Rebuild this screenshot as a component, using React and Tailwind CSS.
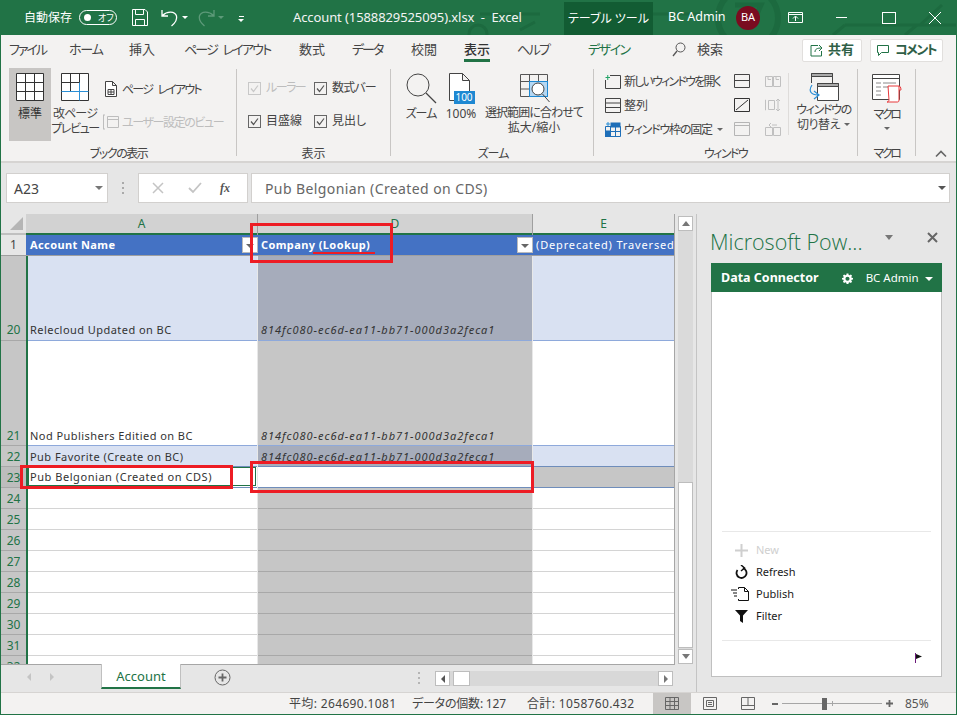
import React from "react";

function Sep({ x = "" }) {
  return <div className={`w-px self-stretch my-[5px] bg-[#c8c6c4] shrink-0 ${x}`} />;
}

function GroupLabel({ children, cls = "" }) {
  return <div className={`h-[16px] pt-[1px] text-center text-[12px] leading-[15px] text-[#444] ${cls}`}>{children}</div>;
}

function Check({ off, label, w, cls = "" }) {
  return (
    <div className="flex items-center h-[16px]" style={{ width: w }}>
      <svg width="13" height="13" viewBox="0 0 13 13" className="shrink-0">
        <rect x=".5" y=".5" width="12" height="12" fill="none" stroke={off ? "#c8c8c8" : "#666"} />
        <path d="M3 6.5l2.5 3L10 3.5" fill="none" stroke={off ? "#c8c8c8" : "#555"} strokeWidth="1.2" />
      </svg>
      <span className={`ml-[5px] text-[12px] leading-[16px] whitespace-nowrap ${cls} ${off ? "text-[#bdbdbd]" : "text-[#444]"}`}>{label}</span>
    </div>
  );
}

function RowHead({ n, h, dark, tall }) {
  return (
    <div
      className={`w-[25px] shrink-0 flex items-end justify-center text-[12px] leading-[15px] border-b border-[#a8a8a8] ${tall ? "pb-[3px]" : "pb-[2px]"} ${dark ? "bg-[#bdbdbd]" : "bg-[#c6c6c6]"} text-[#217346]`}
      style={{ height: h }}
    >
      {n}
    </div>
  );
}

function Row({ n, h, a, d, aBg = "bg-white", dBg = "bg-[#c6c6c6]", eBg = "bg-white", line = "border-[#d4d4d4]", dLine = "border-[#a8a8a8]", active, dark, tall }) {
  return (
    <div className="flex shrink-0" style={{ height: h }}>
      <RowHead n={n} h={h} dark={dark} tall={tall} />
      <div className="w-[2px] bg-[#217346] shrink-0" />
      <div className={`w-[229px] shrink-0 border-b ${line} ${aBg} flex items-end text-[11px] leading-[15px] tracking-[0.45px] text-[#333] relative`}>
        {active ? (
          <div className="w-[228px] h-[19px] border border-[#217346] ml-0 mb-[1px] flex items-center pl-[1px] tracking-[0.55px]">{a}</div>
        ) : (
          <div className={`pl-[2px] whitespace-nowrap ${tall ? "pb-[3px]" : "pb-[2px]"}`}>{a}</div>
        )}
      </div>
      <div className="w-px bg-[#e8e8e8] shrink-0" />
      <div className={`w-[274px] shrink-0 border-b ${dLine} ${dBg} flex items-end pl-[3px] text-[11px] leading-[15px] italic tracking-[0.97px] text-[#333] whitespace-nowrap ${tall ? "pb-[3px]" : "pb-[2px]"}`}>{d}</div>
      <div className="w-px bg-[#e8e8e8] shrink-0" />
      <div className={`w-[141px] shrink-0 border-b ${line} ${eBg}`} />
    </div>
  );
}

function FilterBtn({ cls = "" }) {
  return (
    <div className={`w-[16px] h-[16px] bg-white border border-[#bbb] flex items-center justify-center shrink-0 ${cls}`}>
      <div className="w-0 h-0 border-x-[4px] border-x-transparent border-t-[4px] border-t-[#666] mt-[2px]" />
    </div>
  );
}

function ScrollBtn({ dir, w, h }) {
  const tri = {
    up: "border-x-[4px] border-x-transparent border-b-[5px] border-b-[#777]",
    down: "border-x-[4px] border-x-transparent border-t-[5px] border-t-[#777]",
    left: "border-y-[4px] border-y-transparent border-r-[4px] border-r-[#555]",
    right: "border-y-[4px] border-y-transparent border-l-[4px] border-l-[#777]",
  }[dir];
  return (
    <div className="bg-white border border-[#bdbdbd] flex items-center justify-center shrink-0" style={{ width: w, height: h }}>
      <div className={`w-0 h-0 ${tri}`} />
    </div>
  );
}

function PaneItem({ icon, label, off }) {
  return (
    <div className="flex items-center h-[22px]">
      <div className="w-[30px] flex justify-center shrink-0 ml-[14px]">{icon}</div>
      <span className={`text-[11px] ${off ? "text-[#cfcfcf]" : "text-[#1a1a1a]"}`}>{label}</span>
    </div>
  );
}

export default function App() {
  const rows = [];
  for (let i = 24; i <= 32; i++) rows.push(<Row key={i} n={i} h={21} />);
  return (
    <div className="relative w-[957px] h-[715px] overflow-hidden flex flex-col bg-[#217346] pl-px pr-px pb-px font-['Noto_Sans','Noto_Sans_CJK_JP',sans-serif] [font-feature-settings:'palt'] text-[#444]">
      {/* Title bar */}
      <div className="relative h-[35px] shrink-0 flex items-center text-white text-[12px] -ml-px overflow-hidden">
        <svg className="absolute left-0 top-0 pointer-events-none" width="957" height="35" fill="none" stroke="#1c6a3f" strokeWidth="3">
          <circle cx="748" cy="18" r="30" strokeWidth="6" />
          <path d="M735 5h26l-10 22" strokeWidth="5" />
          <path d="M845 25h112M845 25l-12 10M920 25l22-20M905 35l12-10M480 14h60M640 14h60M520 30l15-8" />
          <circle cx="478" cy="34" r="9" />
        </svg>
        <span className="relative ml-[24px] w-[48px] shrink-0 whitespace-nowrap [font-feature-settings:normal]">自動保存</span>
        <div className="relative ml-[7px] w-[38px] h-[15px] rounded-full border border-white flex items-center shrink-0">
          <div className="w-[7px] h-[7px] rounded-full bg-white ml-[4px]" />
          <span className="text-[9px] leading-none ml-[7px]">オフ</span>
        </div>
        <svg className="relative ml-[15px] shrink-0" width="16" height="17" viewBox="0 0 16 17" fill="none" stroke="#fff">
          <path d="M.5.5h12.5l2.5 2.5v13.5H.5z" />
          <path d="M3.5.5v5h8v-5M3.5 16.5v-6h9v6" />
        </svg>
        <svg className="relative ml-[13px] shrink-0" width="18" height="18" viewBox="0 0 18 18" fill="none" stroke="#fff" strokeWidth="1.3">
          <path d="M1 1v6h6M1.5 6.5C6 2 14 2 15.5 7c1 4-2 7.5-5 10" />
        </svg>
        <div className="relative ml-[3px] w-0 h-0 border-x-[3px] border-x-transparent border-t-[3px] border-t-white" />
        <svg className="relative ml-[10px] shrink-0" width="17" height="18" viewBox="0 0 17 18" fill="none" stroke="#5d9a79" strokeWidth="1.3">
          <path d="M16 1v6h-6M15.5 6.5C11 2 3 2 1.5 7c-1 4 2 7.5 5 10" />
        </svg>
        <div className="relative ml-[3px] w-0 h-0 border-x-[3px] border-x-transparent border-t-[3px] border-t-[#5d9a79]" />
        <div className="relative ml-[14px] flex flex-col items-center gap-[2px] mt-[2px] shrink-0">
          <div className="w-[5px] h-px bg-white" />
          <div className="w-0 h-0 border-x-[3px] border-x-transparent border-t-[3px] border-t-white" />
        </div>
        <span className="relative ml-[49px] w-[271px] shrink-0 text-[13px] tracking-[-0.1px] whitespace-pre text-[#f4f4f4]">Account (1588829525095).xlsx  -  Excel</span>
        <div className="relative self-end h-[33px] w-[89px] shrink-0 bg-[#125c33] flex items-center justify-center text-[12px] whitespace-nowrap">テーブル ツール</div>
        <span className="relative ml-[15px] w-[68px] shrink-0 text-[12.5px] whitespace-nowrap">BC Admin</span>
        <div className="relative w-[24px] h-[24px] rounded-full bg-[#7a0c20] flex items-center justify-center text-[11px] shrink-0">BA</div>
        <svg className="relative ml-[28px] shrink-0" width="15" height="11" viewBox="0 0 15 11" fill="none" stroke="#fff">
          <path d="M.5.5h14v10H.5zM.5 2.5h14M7.5 9V4.5M5 6.5l2.5-2.5L10 6.5" />
        </svg>
        <div className="relative ml-[33px] w-[11px] h-px bg-white shrink-0" />
        <div className="relative ml-[35px] w-[14px] h-[12px] border border-white shrink-0" />
        <svg className="relative ml-[32px] shrink-0" width="14" height="14" viewBox="0 0 14 14" stroke="#fff" strokeWidth="1">
          <path d="M1 1l12 12M13 1L1 13" />
        </svg>
      </div>

      {/* Tab row */}
      <div className="h-[29px] shrink-0 bg-[#f3f2f1] flex items-center text-[13px] text-[#444] relative whitespace-nowrap">
        <span className="ml-[8px] w-[60px] tracking-[-2px]">ファイル</span>
        <span className="w-[60px] tracking-[-1.2px]">ホーム</span>
        <span className="w-[55px]">挿入</span>
        <span className="w-[115px] tracking-[-1.8px] [word-spacing:4px]">ページ レイアウト</span>
        <span className="w-[53px]">数式</span>
        <span className="w-[59px] tracking-[-2px]">データ</span>
        <span className="w-[53px]">校閲</span>
        <span className="w-[53px] h-full relative flex items-center text-[#333] font-medium">
          表示
          <span className="absolute left-0 top-[24px] w-[26px] h-[3px] bg-[#217346]" />
        </span>
        <span className="w-[71px] tracking-[-1.6px]">ヘルプ</span>
        <span className="w-[84px] text-[#217346] tracking-[-1.5px]">デザイン</span>
        <svg width="14" height="15" viewBox="0 0 14 15" fill="none" stroke="#555" className="shrink-0">
          <circle cx="8.5" cy="5.5" r="4.5" />
          <path d="M5 9l-4 5" strokeWidth="1.3" />
        </svg>
        <span className="ml-[11px] w-[105px]">検索</span>
        <div className="w-[60px] h-[23px] mt-px bg-white border border-[#e1dfdd] rounded-[2px] flex items-center justify-center gap-[5px] font-bold text-[#2f5f47] shrink-0">
          <svg width="13" height="13" viewBox="0 0 13 13" fill="none" stroke="#217346">
            <path d="M8 1.5h-7v10.5h10.5v-5M5 8c0-3 2-4 7-4M9 1l3 3-3 3" />
          </svg>
          共有
        </div>
        <div className="ml-[8px] w-[73px] h-[23px] mt-px bg-white border border-[#e1dfdd] rounded-[2px] flex items-center justify-center gap-[6px] font-bold text-[#2f5f47] tracking-[-1.6px] shrink-0">
          <svg width="12" height="12" viewBox="0 0 12 12" fill="none" stroke="#217346">
            <path d="M.5 1.5h11v7h-7l-3 3v-3h-1z" />
          </svg>
          コメント
        </div>
      </div>

      {/* Ribbon */}
      <div className="h-[99px] shrink-0 bg-[#f3f2f1] border-b-2 border-[#d6d4d2] flex text-[12px] leading-[15px] whitespace-nowrap">
        {/* Book views */}
        <div className="w-[235px] shrink-0 flex flex-col">
          <div className="h-[81px] pt-[4px] flex">
            <div className="ml-[8px] w-[42px] h-[73px] bg-[#c8c6c4] flex flex-col items-center pt-[5px]">
              <svg width="28" height="28" viewBox="0 0 28 28" fill="#fff" stroke="#333">
                <path d="M.5.5h27v27H.5zM9.5.5v27M18.5.5v27M.5 9.5h27M.5 18.5h27" />
              </svg>
              <span className="mt-[5px] text-[#333] text-[12px]">標準</span>
            </div>
            <div className="ml-[2px] w-[44px] flex flex-col items-center pt-[5px]">
              <svg width="28" height="28" viewBox="0 0 28 28" fill="#fff" stroke="#333">
                <path d="M.5.5h27v27H.5z" />
                <path d="M9.5.5v18M18.5.5v27M.5 9.5h18" fill="none" />
                <path d="M.5 18.5h27" stroke="#2b8fd6" />
                <path d="M18.5 9.5v18" stroke="#2b8fd6" />
              </svg>
              <span className="mt-[5px] tracking-[-0.9px]">改ページ</span>
              <span className="tracking-[-1.4px]">プレビュー</span>
            </div>
            <div className="ml-[8px] flex flex-col">
              <div className="flex items-center h-[16px] mt-[13px]">
                <svg width="12" height="16" viewBox="0 0 12 16" fill="#fff" stroke="#444" className="shrink-0">
                  <path d="M.5.5h7l4 4v11H.5zM7.5.5v4h4M3 8.5h6v5H3zM6 8.5v5M3 11h6" />
                </svg>
                <span className="ml-[5px] tracking-[-1.8px] [word-spacing:4px]">ページ レイアウト</span>
              </div>
              <div className="flex items-center h-[16px] mt-[17px] -ml-[2px] text-[#bdbdbd]">
                <svg width="16" height="16" viewBox="0 0 16 16" fill="none" stroke="#bdbdbd" className="shrink-0">
                  <path d="M.5 1v14M0 1h2M0 15h2M4.5 2.5h11v11h-11zM4.5 5.5h11" />
                </svg>
                <span className="ml-[3px] tracking-[-1.4px]">ユーザー設定のビュー</span>
              </div>
            </div>
          </div>
          <GroupLabel cls="tracking-[-1.5px]">ブックの表示</GroupLabel>
        </div>
        <Sep />
        {/* Show */}
        <div className="w-[153px] shrink-0 flex flex-col">
          <div className="h-[81px] pl-[11px] pt-[16px] flex flex-col gap-[17px]">
            <div className="flex">
              <Check off label="ルーラー" w={66} cls="tracking-[-1.5px]" />
              <Check label="数式バー" w={70} cls="tracking-[-0.8px]" />
            </div>
            <div className="flex">
              <Check label="目盛線" w={66} />
              <Check label="見出し" w={70} />
            </div>
          </div>
          <GroupLabel>表示</GroupLabel>
        </div>
        <Sep />
        {/* Zoom */}
        <div className="w-[202px] shrink-0 flex flex-col">
          <div className="h-[81px] pt-[9px] flex">
            <div className="ml-[12px] w-[36px] flex flex-col items-center">
              <svg width="31" height="31" viewBox="0 0 31 31" fill="none" stroke="#444">
                <circle cx="12" cy="12" r="11" />
                <path d="M20 20l10 10" strokeWidth="1.2" />
              </svg>
              <span className="mt-[2px] tracking-[-1px]">ズーム</span>
            </div>
            <div className="ml-[4px] w-[36px] flex flex-col items-center">
              <div className="relative w-[27px] h-[31px]">
                <svg width="21" height="28" viewBox="0 0 21 28" fill="#fff" stroke="#444" className="ml-[1px]">
                  <path d="M.5.5h13l7 7v20H.5zM13.5.5v7h7" />
                </svg>
                <div className="absolute right-0 bottom-0 w-[21px] h-[13px] bg-[#1e88d2] text-white text-[10px] leading-[13px] text-center">100</div>
              </div>
              <span className="mt-[2px]">100%</span>
            </div>
            <div className="ml-[4px] w-[102px] flex flex-col items-center">
              <svg width="31" height="30" viewBox="0 0 31 30" fill="#fff" stroke="#555" className="mt-[1px] -mb-[1px] mr-[-3px]">
                <path d="M.5.5h27v22H.5zM9.5.5v22M18.5.5v22M.5 7.5h27M.5 15h27" fill="none" />
                <rect x="9.5" y="7.5" width="18" height="15" fill="#b5d7f2" stroke="#1e88d2" />
                <circle cx="18" cy="15" r="6" fill="#fff" stroke="#444" />
                <path d="M22.5 20l7 8" stroke="#444" />
              </svg>
              <span className="mt-[2px] tracking-[-0.9px]">選択範囲に合わせて</span>
              <span>拡大/縮小</span>
            </div>
          </div>
          <GroupLabel cls="tracking-[-1px]"><span className="pl-[2px]">ズーム</span></GroupLabel>
        </div>
        <Sep />
        {/* Window */}
        <div className="w-[263px] shrink-0 flex flex-col">
          <div className="h-[81px] pt-[9px] flex">
            <div className="ml-[11px] w-[129px] flex flex-col gap-[8px]">
              <div className="flex items-center h-[16px]">
                <svg width="16" height="15" viewBox="0 0 16 15" fill="none" stroke="#444" className="shrink-0">
                  <path d="M5 1.5h10.5v13H.5V6" />
                  <path d="M.5 3.5H5M2.75 1v5" stroke="#21a366" />
                </svg>
                <span className="ml-[3px] tracking-[-1.8px]">新しいウィンドウを開く</span>
              </div>
              <div className="flex items-center h-[16px]">
                <svg width="16" height="15" viewBox="0 0 16 15" fill="none" stroke="#444" className="shrink-0">
                  <path d="M.5.5h15v14H.5zM.5 5h15M.5 9.5h15" />
                </svg>
                <span className="ml-[3px]">整列</span>
              </div>
              <div className="flex items-center h-[16px]">
                <svg width="16" height="15" viewBox="0 0 16 15" fill="none" stroke="#1e6fb8" className="shrink-0">
                  <path d="M.5 4.5h15v10H.5zM5.5 4.5v10M10.5 4.5v10M.5 9.5h15" />
                  <rect x="0" y="9" width="5" height="6" fill="#1e6fb8" />
                  <rect x="6" y="1" width="9" height="4" fill="#1e6fb8" />
                  <path d="M3 0v4M1 2h4" stroke="#2b8fd6" />
                </svg>
                <span className="ml-[3px] tracking-[-1.2px]">ウィンドウ枠の固定</span>
                <div className="ml-[5px] w-0 h-0 border-x-[3px] border-x-transparent border-t-[3px] border-t-[#666]" />
              </div>
            </div>
            <div className="w-[16px] flex flex-col gap-[10px] shrink-0 pt-[1px]">
              <svg width="16" height="14" viewBox="0 0 16 14" fill="none" stroke="#444"><path d="M.5.5h15v13H.5zM.5 6.5h15" /></svg>
              <svg width="16" height="14" viewBox="0 0 16 14" fill="none" stroke="#333"><path d="M.5.5h15v13H.5zM2 12L14 2" /></svg>
              <svg width="16" height="14" viewBox="0 0 16 14" fill="none" stroke="#b5b5b5"><path d="M.5.5h15v13H.5zM.5 3.5h15" /></svg>
            </div>
            <div className="ml-[15px] w-[16px] flex flex-col gap-[10px] shrink-0 pt-[1px]">
              <svg width="16" height="14" viewBox="0 0 16 14" fill="none" stroke="#c0c0c0"><path d="M.5 2.5h7v10h-7zM8.5 2.5h7v10h-7zM3 2.5v3h3M11 2.5v3h3" /></svg>
              <svg width="16" height="14" viewBox="0 0 16 14" fill="none" stroke="#c0c0c0"><path d="M1 2H.5v10H1M3.5 2.5h6v9h-6zM13 1v12M11 3l2-2 2 2M11 11l2 2 2-2" /></svg>
              <svg width="16" height="14" viewBox="0 0 16 14" fill="none" stroke="#c0c0c0"><path d="M.5 5.5h7v8h-7zM8.5 5.5h7v8h-7zM7 3h5M4 3l2-2M4 3l2 2" /></svg>
            </div>
            <div className="ml-[7px] w-px h-[62px] bg-[#dedcda] shrink-0" />
            <div className="ml-[1px] w-[67px] flex flex-col items-center shrink-0">
              <svg width="30" height="28" viewBox="0 0 30 28" fill="none" stroke="#444" className="mb-[1px]">
                <path d="M2.5.5h21v10M2.5.5V10" />
                <path d="M2.5.5h21v3h-21z" fill="#aaa" />
                <path d="M8.5 10.5h21v17h-21z" fill="#fff" />
                <path d="M8.5 10.5h21v3h-21z" fill="#aaa" />
                <path d="M3 12c-4 6-1 10 6 10M5 18l5 4-5 4" stroke="#2b8fd6" strokeWidth="1.2" />
              </svg>
              <span className="tracking-[-1.3px]">ウィンドウの</span>
              <span className="flex items-center tracking-[-0.5px]">切り替え
                <span className="ml-[4px] w-0 h-0 border-x-[3px] border-x-transparent border-t-[3px] border-t-[#666]" />
              </span>
            </div>
          </div>
          <GroupLabel cls="tracking-[-1.6px]">ウィンドウ</GroupLabel>
        </div>
        <Sep />
        {/* Macro */}
        <div className="w-[57px] shrink-0 flex flex-col">
          <div className="h-[81px] pt-[10px] flex flex-col items-center">
            <svg width="30" height="29" viewBox="0 0 30 29" fill="none" stroke="#444" className="shrink-0">
              <path d="M.5.5h27v25H.5zM.5 4.5h27" fill="#fff" />
              <path d="M4 9h5M11 9h13M4 13h5M11 13h8M4 17h5M4 21h5" stroke="#888" />
              <path d="M16 12h11v14c0 2-1 2-2 2H15c1 0 2-1 2-2z M27 12c2 0 2 4 2 4h-2" fill="#fff" stroke="#e8383b" />
            </svg>
            <span className="mt-[4px] tracking-[-2.3px]">マクロ</span>
            <div className="mt-[5px] w-0 h-0 border-x-[3px] border-x-transparent border-t-[3px] border-t-[#666]" />
          </div>
          <GroupLabel cls="tracking-[-2.3px]">マクロ</GroupLabel>
        </div>
        <Sep />
        <div className="flex-1 flex items-end justify-end pr-[9px] pb-[3px]">
          <svg width="12" height="8" viewBox="0 0 12 8" fill="none" stroke="#666" strokeWidth="1.6">
            <path d="M1 6.5l5-5 5 5" />
          </svg>
        </div>
      </div>

      {/* Formula bar */}
      <div className="h-[51px] shrink-0 bg-[#e6e6e6] flex pt-[10px] whitespace-nowrap">
        <div className="ml-[5px] w-[102px] h-[30px] bg-white border border-[#d2d0ce] flex items-center justify-between pl-[7px] pr-[4px] text-[14px] text-[#444]">
          <span>A23</span>
          <div className="w-0 h-0 border-x-[4px] border-x-transparent border-t-[4px] border-t-[#777]" />
        </div>
        <div className="ml-[14px] w-[3px] h-[12px] mt-[9px] flex flex-col justify-between shrink-0">
          <div className="w-[2px] h-[2px] bg-[#aaa]" />
          <div className="w-[2px] h-[2px] bg-[#aaa]" />
          <div className="w-[2px] h-[2px] bg-[#aaa]" />
        </div>
        <div className="ml-[13px] w-[110px] h-[30px] bg-white border border-[#d2d0ce] flex items-center shrink-0">
          <svg width="12" height="12" viewBox="0 0 12 12" stroke="#c4c4c4" strokeWidth="1.5" className="ml-[13px]">
            <path d="M1 1l10 10M11 1L1 11" />
          </svg>
          <svg width="14" height="12" viewBox="0 0 14 12" fill="none" stroke="#c4c4c4" strokeWidth="1.8" className="ml-[24px]">
            <path d="M1 6l4 4 8-9" />
          </svg>
          <span className="ml-[18px] text-[12px] italic font-bold text-[#555] font-['Liberation_Serif',serif]">fx</span>
        </div>
        <div className="ml-[3px] w-[699px] h-[30px] bg-white border border-[#d2d0ce] flex items-center justify-between pl-[13px] pr-[3px] text-[14px] tracking-[0.4px] text-[#666] shrink-0">
          <span>Pub Belgonian (Created on CDS)</span>
          <div className="w-0 h-0 border-x-[4px] border-x-transparent border-t-[4px] border-t-[#555]" />
        </div>
      </div>

      {/* Main */}
      <div className="flex h-[478px] shrink-0 bg-[#e6e6e6]">
        <div className="w-[695px] shrink-0 flex flex-col">
          <div className="flex h-[451px] shrink-0">
            {/* Grid */}
            <div className="w-[674px] shrink-0 overflow-hidden flex flex-col bg-white border-r border-b border-[#a6a6a6]">
              <div className="flex h-[21px] shrink-0 text-[12px] bg-[#e6e6e6]">
                <div className="w-[25px] h-[21px] shrink-0 flex items-end justify-end pr-[3px] pb-[3px] border-b-2 border-[#c0c0c0]">
                  <div className="w-0 h-0 border-l-[13px] border-l-transparent border-b-[13px] border-b-[#b5b5b5]" />
                </div>
                <div className="w-[231px] shrink-0 bg-[#d2d2d2] border-b-2 border-[#217346] flex items-center justify-center text-[#217346]">A</div>
                <div className="w-px bg-[#9f9f9f] shrink-0" />
                <div className="w-[274px] shrink-0 bg-[#d2d2d2] border-b-2 border-[#217346] flex items-center justify-center text-[#217346]">D</div>
                <div className="w-px bg-[#9f9f9f] shrink-0" />
                <div className="flex-1 bg-[#e6e6e6] border-b-2 border-[#217346] flex items-center justify-center text-[#217346]">E</div>
              </div>
              {/* Header row */}
              <div className="flex h-[21px] shrink-0 text-[11px]">
                <div className="w-[25px] shrink-0 bg-[#e6e6e6] border-b border-[#9f9f9f] flex items-center justify-center text-[12px] text-[#444]">1</div>
                <div className="flex-1 bg-[#4472c4] border-b border-[#9f9f9f] flex items-center text-white font-bold tracking-[0.4px] whitespace-nowrap overflow-hidden">
                  <div className="w-[232px] shrink-0 flex items-center pl-[4px] justify-between">
                    <span>Account Name</span>
                    <FilterBtn />
                  </div>
                  <div className="w-[275px] shrink-0 flex items-center pl-[3px] justify-between">
                    <span>Company (Lookup)</span>
                    <FilterBtn />
                  </div>
                  <span className="pl-[3px] font-normal tracking-[0.85px]">(Deprecated) Traversed</span>
                </div>
              </div>
              <Row tall n={20} h={85} a="Relecloud Updated on BC" d="814fc080-ec6d-ea11-bb71-000d3a2feca1" aBg="bg-[#d9e1f2]" dBg="bg-[#a6acbb]" eBg="bg-[#d9e1f2]" line="border-[#8ea9db]" dLine="border-[#8ea9db]" />
              <Row n={21} h={105} a="Nod Publishers Editied on BC" d="814fc080-ec6d-ea11-bb71-000d3a2feca1" line="border-[#8ea9db]" dLine="border-[#8ea9db]" />
              <Row n={22} h={21} a="Pub Favorite (Create on BC)" d="814fc080-ec6d-ea11-bb71-000d3a2feca1" aBg="bg-[#d9e1f2]" dBg="bg-[#a6acbb]" eBg="bg-[#d9e1f2]" line="border-[#6f8dbb]" dLine="border-[#6f8dbb]" />
              <Row n={23} h={21} a="Pub Belgonian (Created on CDS)" d="" dBg="bg-white" eBg="bg-[#c6c6c6]" line="border-[#6f8dbb]" dLine="border-[#6f8dbb]" active dark />
              {rows}
            </div>
            {/* Vertical scrollbar */}
            <div className="w-[21px] shrink-0 flex flex-col items-center pt-[2px] pb-[1px]">
              <ScrollBtn dir="up" w={15} h={15} />
              <div className="w-[15px] flex-1 bg-[#dadada] flex flex-col">
                <div className="h-[251px] shrink-0" />
                <div className="h-[166px] shrink-0 bg-white border border-[#bdbdbd]" />
              </div>
              <ScrollBtn dir="down" w={15} h={15} />
            </div>
          </div>
          {/* Sheet tabs */}
          <div className="h-[27px] shrink-0 flex items-start relative">
            <div className="ml-[26px] mt-[8px] w-0 h-0 border-y-[4px] border-y-transparent border-r-[4px] border-r-[#c4c4c4]" />
            <div className="ml-[19px] mt-[8px] w-0 h-0 border-y-[4px] border-y-transparent border-l-[4px] border-l-[#c4c4c4]" />
            <div className="ml-[47px] -mt-px w-[80px] h-[25px] pt-[2px] bg-white border-b-2 border-[#217346] border-x border-x-[#c0c0c0] flex items-center justify-center text-[13px] text-[#217346] shrink-0">Account</div>
            <svg width="17" height="17" viewBox="0 0 17 17" fill="none" stroke="#666" className="ml-[33px] mt-[4px] shrink-0">
              <circle cx="8.5" cy="8.5" r="7.5" />
              <path d="M8.5 4.5v8M4.5 8.5h8" strokeWidth="1.8" />
            </svg>
            <div className="ml-[187px] mt-[7px] w-[2px] h-[12px] flex flex-col justify-between shrink-0">
              <div className="h-[2px] bg-[#b5b5b5]" />
              <div className="h-[2px] bg-[#b5b5b5]" />
              <div className="h-[2px] bg-[#b5b5b5]" />
            </div>
            <div className="ml-[15px] mt-[6px] w-[238px] h-[15px] bg-[#d8d8d8] flex shrink-0">
              <ScrollBtn dir="left" w={15} h={15} />
              <div className="ml-[3px] w-[17px] h-[15px] bg-white border border-[#bdbdbd]" />
              <div className="flex-1" />
              <ScrollBtn dir="right" w={15} h={15} />
            </div>
          </div>
        </div>
        <div className="w-px bg-[#c4c4c4] shrink-0" />
        {/* Task pane */}
        <div className="flex-1 flex flex-col pl-[14px] pr-[14px]">
          <div className="h-[49px] shrink-0 flex items-start justify-between relative">
            <span className="text-[#217346] text-[21.5px] leading-[28px] mt-[14px] font-light font-['Open_Sans','Noto_Sans',sans-serif] whitespace-nowrap -ml-px">Microsoft Pow...</span>
            <div className="flex items-center absolute right-[4px] top-[18px]">
              <div className="w-0 h-0 border-x-[4px] border-x-transparent border-t-[5px] border-t-[#777]" />
              <svg width="11" height="11" viewBox="0 0 11 11" stroke="#666" strokeWidth="2" className="ml-[34px]">
                <path d="M1 1l9 9M10 1L1 10" />
              </svg>
            </div>
          </div>
          <div className="h-[414px] shrink-0 bg-white border border-[#c0c0c0] flex flex-col">
            <div className="h-[29px] pt-[2px] -mt-px -mx-px shrink-0 bg-[#217346] text-white flex items-center pl-[10px]">
              <span className="text-[12.5px] font-bold">Data Connector</span>
              <svg width="11" height="11" viewBox="0 0 24 24" fill="#fff" className="ml-[23px] shrink-0">
                <path fillRule="evenodd" d="M10 1h4l.6 3.1 2 .8L19.3 3.2 22 6l-1.800 2.600.9 2L24 11v3l-3 .6-.8 2 1.800 2.600-2.700 2.800-2.700-1.800-2 .8L14 24h-4l-.6-3-2-.8L4.700 22 2 19.200l1.800-2.600-.8-2L0 14v-3l3.100-.5.800-2L2 6l2.700-2.800 2.700 1.800 2-.8zM12 8a4.500 4.500 0 1 0 0 9 4.500 4.500 0 0 0 0-9z" />
              </svg>
              <span className="ml-[13px] text-[11.5px] -mt-[2px]">BC Admin</span>
              <div className="ml-[6px] w-0 h-0 border-x-[4px] border-x-transparent border-t-[4px] border-t-white" />
            </div>
            <div className="h-[239px] shrink-0" />
            <div className="mx-[10px] h-px bg-[#e8e8e8] shrink-0" />
            <div className="h-[7px] shrink-0" />
            <PaneItem off label="New" icon={
              <svg width="13" height="13" viewBox="0 0 13 13" stroke="#cfcfcf" strokeWidth="2"><path d="M6.5 0v13M0 6.5h13" /></svg>
            } />
            <PaneItem label="Refresh" icon={
              <svg width="13" height="14" viewBox="0 0 13 14" fill="none" stroke="#111" strokeWidth="1.8"><path d="M8 3.2A5 5 0 1 1 2.5 5" /><path d="M6 0l3.5 3L6 6" strokeWidth="1.5" /></svg>
            } />
            <PaneItem label="Publish" icon={
              <svg width="18" height="14" viewBox="0 0 18 14" fill="none" stroke="#111" className="-ml-[3px]"><path d="M7.5 2V.5h6l4 4v9h-10V12M13.5.5v4h4" /><path d="M0 3h6M2 6h4M3 9h3" strokeWidth="1.2" /></svg>
            } />
            <PaneItem label="Filter" icon={
              <svg width="13" height="14" viewBox="0 0 13 14" fill="#111"><path d="M0 1h13L8 6.5V14L5 12V6.5z" /></svg>
            } />
            <div className="h-[13px] shrink-0" />
            <div className="mx-[10px] h-px bg-[#e8e8e8] shrink-0" />
            <div className="flex justify-end pr-[18px] pt-[12px]">
              <svg width="8" height="10" viewBox="0 0 8 10">
                <path d="M.5 0v10" stroke="#6b1a7a" />
                <path d="M1 1l6 2.5L1 6z" fill="#111" />
              </svg>
            </div>
          </div>
        </div>
      </div>

      {/* Status bar */}
      <div className="h-[22px] shrink-0 bg-[#f3f2f1] flex items-center text-[12px] text-[#444] whitespace-nowrap border-t border-[#d6d4d2]">
        <span className="ml-[288px] w-[123px] tracking-[0.35px]">平均: 264690.1081</span>
        <span className="w-[115px] tracking-[-0.2px]">データの個数: 127</span>
        <span className="w-[126px] tracking-[0.35px]">合計: 1058760.432</span>
        <div className="w-[38px] h-full bg-[#c8c6c4] flex items-center justify-center shrink-0">
          <svg width="14" height="13" viewBox="0 0 14 13" fill="none" stroke="#666"><path d="M.5.5h13v12H.5zM5 .5v12M9.5.5v12M.5 4.5h13M.5 8.5h13" /></svg>
        </div>
        <svg width="14" height="13" viewBox="0 0 14 13" fill="none" stroke="#666" className="ml-[12px] shrink-0">
          <path d="M.5.5h13v12H.5zM3.5 3.5h7v6h-7zM5 5.5h4M5 7.5h4" />
        </svg>
        <svg width="14" height="13" viewBox="0 0 14 13" fill="none" stroke="#666" className="ml-[24px] shrink-0">
          <path d="M.5.5h13v12H.5zM.5 8.5h13M7 .5v8" />
        </svg>
        <div className="ml-[17px] w-[6px] h-[2px] bg-[#666] shrink-0" />
        <div className="ml-[4px] w-[100px] h-[12px] relative shrink-0 flex items-center">
          <div className="w-full h-px bg-[#a6a6a6]" />
          <div className="absolute left-[40px] top-0 w-[5px] h-[12px] bg-[#666]" />
          <div className="absolute left-[50px] top-[3px] w-px h-[5px] bg-[#a6a6a6]" />
        </div>
        <svg width="7" height="7" viewBox="0 0 7 7" stroke="#666" strokeWidth="1.8" className="ml-[4px] shrink-0"><path d="M3.5 0v7M0 3.5h7" /></svg>
        <span className="ml-[12px] text-[12px] text-[#555]">85%</span>
      </div>

      {/* Review annotations laid over the sheet */}
      <div className="absolute left-[250px] top-[223px] w-[143px] h-[40px] border-[3px] border-[#ed1c24]" />
      <div className="absolute left-[313px] top-[252px] w-[62px] h-[2px] bg-[#ed1c24]" />
      <div className="absolute left-[20px] top-[465px] w-[213px] h-[24px] border-[3px] border-[#ed1c24]" />
      <div className="absolute left-[250px] top-[461px] w-[284px] h-[32px] border-[3px] border-[#ed1c24]" />
    </div>
  );
}
